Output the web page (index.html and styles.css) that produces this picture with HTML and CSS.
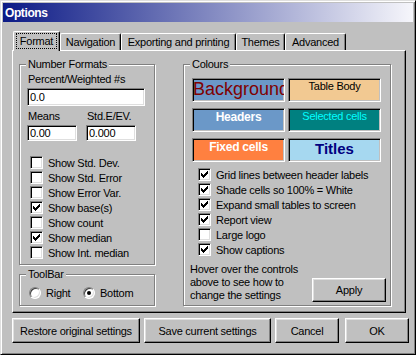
FILE: index.html
```html
<!DOCTYPE html>
<html lang="en">
<head>
  <meta charset="UTF-8" />
  <title>Options</title>
  <link rel="stylesheet" href="styles.css">
</head>
<body>

  <div class="window">
    <div class="titlebar">Options</div>

    <div class="dialog">
      <div class="tabs">
        <div class="tab tab-format tab-active"><span class="focus">Format</span></div>
        <div class="tab tab-nav">Navigation</div>
        <div class="tab tab-export">Exporting and printing</div>
        <div class="tab tab-themes">Themes</div>
        <div class="tab tab-advanced">Advanced</div>
      </div>

      <div class="panel">
        <div class="col-left">
          <div class="group group-numbers">
            <span class="group-label">Number Formats</span>
            <div class="label">Percent/Weighted #s</div>
            <input class="field field-wide" type="text" value="0.0" readonly>
            <div class="pair">
              <div>
                <div class="label">Means</div>
                <input class="field field-short" type="text" value="0.00" readonly>
              </div>
              <div>
                <div class="label">Std.E/EV.</div>
                <input class="field field-short" type="text" value="0.000" readonly>
              </div>
            </div>
            <ul class="checks checks-numbers">
              <li><span class="box"></span>Show Std. Dev.</li>
              <li><span class="box"></span>Show Std. Error</li>
              <li><span class="box"></span>Show Error Var.</li>
              <li><span class="box"><svg width="11" height="11" viewBox="1 1 11 11"><path d="M3 5h1v1h1v1h1v-1h1v-1h1v-1h1v-1h1v3h-1v1h-1v1h-1v1h-1v1h-1v-1h-1v-1h-1z"/></svg></span>Show base(s)</li>
              <li><span class="box"></span>Show count</li>
              <li><span class="box"><svg width="11" height="11" viewBox="1 1 11 11"><path d="M3 5h1v1h1v1h1v-1h1v-1h1v-1h1v-1h1v3h-1v1h-1v1h-1v1h-1v1h-1v-1h-1v-1h-1z"/></svg></span>Show median</li>
              <li><span class="box"></span>Show Int. median</li>
            </ul>
          </div>

          <div class="group group-toolbar">
            <span class="group-label">ToolBar</span>
            <div class="radios">
              <div class="radio-item radio-right"><span class="radio"></span>Right</div>
              <div class="radio-item"><span class="radio radio-on"></span>Bottom</div>
            </div>
          </div>
        </div>

        <div class="group group-colours">
          <span class="group-label">Colours</span>
          <div class="swatches">
            <div class="swatch sw-background">Background</div>
            <div class="swatch sw-body">Table Body</div>
            <div class="swatch sw-headers">Headers</div>
            <div class="swatch sw-selected">Selected cells</div>
            <div class="swatch sw-fixed">Fixed cells</div>
            <div class="swatch sw-titles">Titles</div>
          </div>
          <ul class="checks checks-colours">
            <li><span class="box"><svg width="11" height="11" viewBox="1 1 11 11"><path d="M3 5h1v1h1v1h1v-1h1v-1h1v-1h1v-1h1v3h-1v1h-1v1h-1v1h-1v1h-1v-1h-1v-1h-1z"/></svg></span>Grid lines between header labels</li>
            <li><span class="box"><svg width="11" height="11" viewBox="1 1 11 11"><path d="M3 5h1v1h1v1h1v-1h1v-1h1v-1h1v-1h1v3h-1v1h-1v1h-1v1h-1v1h-1v-1h-1v-1h-1z"/></svg></span>Shade cells so 100% = White</li>
            <li><span class="box"><svg width="11" height="11" viewBox="1 1 11 11"><path d="M3 5h1v1h1v1h1v-1h1v-1h1v-1h1v-1h1v3h-1v1h-1v1h-1v1h-1v1h-1v-1h-1v-1h-1z"/></svg></span>Expand small tables to screen</li>
            <li><span class="box"><svg width="11" height="11" viewBox="1 1 11 11"><path d="M3 5h1v1h1v1h1v-1h1v-1h1v-1h1v-1h1v3h-1v1h-1v1h-1v1h-1v1h-1v-1h-1v-1h-1z"/></svg></span>Report view</li>
            <li><span class="box"></span>Large logo</li>
            <li><span class="box"><svg width="11" height="11" viewBox="1 1 11 11"><path d="M3 5h1v1h1v1h1v-1h1v-1h1v-1h1v-1h1v3h-1v1h-1v1h-1v1h-1v1h-1v-1h-1v-1h-1z"/></svg></span>Show captions</li>
          </ul>
          <div class="hover-row">
            <div class="hover-text">Hover over the controls<br>above to see how to<br>change the settings</div>
            <div class="btn btn-apply">Apply</div>
          </div>
        </div>
      </div>

      <div class="buttons">
        <div class="btn btn-restore">Restore original settings</div>
        <div class="btn btn-save">Save current settings</div>
        <div class="btn btn-cancel">Cancel</div>
        <div class="btn btn-ok">OK</div>
      </div>
    </div>
  </div>

</body>
</html>
```

FILE: styles.css
```css
body {
  margin: 0;
  font-family: 'Liberation Sans', Arial, sans-serif;
  font-size: 11px;
  letter-spacing: -0.25px;
  color: #000;
  background-color: #c0c0c0;
}

/* window frame */
.window {
  width: 416px;
  height: 355px;
  box-sizing: border-box;
  background-color: #c0c0c0;
  border: 1px solid;
  border-color: #dfdfdf #000 #000 #dfdfdf;
  box-shadow: inset 1px 1px #fff, inset -1px -1px #808080;
  padding: 2px;
}

.titlebar {
  height: 19px;
  box-sizing: border-box;
  padding: 1px 0 0 2px;
  display: flex;
  align-items: center;
  background: linear-gradient(to right, #0c1a86, #f6f6fb);
  color: #fff;
  font-weight: bold;
  font-size: 12px;
  letter-spacing: -0.4px;
}

.dialog {
  padding: 9px 0 0 9px;
}

/* tabs */
.tabs {
  display: flex;
  align-items: flex-end;
  height: 19px;
  padding-left: 1px;
  position: relative;
  z-index: 1;
}

.tab {
  height: 17px;
  box-sizing: border-box;
  display: flex;
  align-items: center;
  justify-content: center;
  background-color: #c0c0c0;
  border-top: 1px solid #fff;
  border-left: 1px solid #fff;
  border-right: 1px solid #000;
  border-radius: 2px 2px 0 0;
  box-shadow: inset -1px 0 #808080;
}

.tab-active {
  height: 20px;
  margin-bottom: -1px;
  padding-bottom: 1px;
}

.focus {
  height: 16px;
  box-sizing: border-box;
  display: flex;
  align-items: center;
  padding: 0 3px;
  border: 1px dotted #000;
}

.tab-format { width: 47px; }
.tab-nav { width: 61px; }
.tab-export { width: 115px; }
.tab-themes { width: 49px; }
.tab-advanced { width: 61px; }

/* tab page */
.panel {
  width: 394px;
  height: 263px;
  box-sizing: border-box;
  display: flex;
  gap: 28px;
  padding: 13px 0 0 6px;
  border: 1px solid;
  border-color: #fff #000 #000 #fff;
  box-shadow: inset -1px -1px #808080;
}

.col-left {
  display: flex;
  flex-direction: column;
  gap: 9px;
}

.group {
  position: relative;
  box-sizing: border-box;
  border: 1px solid #808080;
  box-shadow: 1px 1px #fff, inset 1px 1px #fff;
}

.group-label {
  position: absolute;
  top: -7px;
  left: 6px;
  padding: 0 2px;
  line-height: 13px;
  background-color: #c0c0c0;
}

.group-numbers {
  width: 136px;
  height: 201px;
  padding: 8px 0 0 7px;
}

.label {
  line-height: 13px;
  padding-left: 1px;
}

.field {
  display: block;
  box-sizing: border-box;
  height: 18px;
  margin: 2px 0 0;
  padding: 0 0 0 2px;
  border: 1px solid;
  border-color: #808080 #fff #fff #808080;
  box-shadow: inset 1px 1px #000, inset -1px -1px #dfdfdf;
  background-color: #fff;
  font: inherit;
  letter-spacing: inherit;
  color: #000;
  outline: none;
}

.field-wide { width: 118px; }

.field-short {
  width: 50px;
  height: 16px;
}

.pair {
  display: flex;
  gap: 9px;
  margin-top: 4px;
}

.checks {
  list-style: none;
  padding: 0;
}

.checks li {
  display: flex;
  align-items: center;
  height: 15px;
  gap: 5px;
}

.checks-numbers { margin: 14px 0 0 3px; }
.checks-colours { margin: 5px 0 0 6px; }

.box {
  flex: none;
  width: 13px;
  height: 13px;
  box-sizing: border-box;
  border: 1px solid;
  border-color: #808080 #fff #fff #808080;
  box-shadow: inset 1px 1px #000, inset -1px -1px #dfdfdf;
  background-color: #fff;
}

.box svg {
  display: block;
  fill: #000;
}

/* toolbar radios */
.group-toolbar {
  width: 136px;
  height: 32px;
  padding: 10px 0 0 9px;
}

.radios {
  display: flex;
}

.radio-item {
  display: flex;
  align-items: center;
  gap: 5px;
  height: 15px;
}

.radio-right { width: 54px; }

.radio {
  position: relative;
  flex: none;
  width: 12px;
  height: 12px;
  box-sizing: border-box;
  border-radius: 50%;
  border: 1px solid;
  border-color: #808080 #fff #fff #808080;
  box-shadow: inset 1px 1px #404040, inset -1px -1px #dfdfdf;
  background-color: #fff;
}

.radio-on::after {
  content: "";
  position: absolute;
  left: 3px;
  top: 3px;
  width: 4px;
  height: 4px;
  border-radius: 50%;
  background-color: #000;
}

/* colours */
.group-colours {
  width: 208px;
  height: 242px;
  padding: 13px 0 0 8px;
}

.swatches {
  display: grid;
  grid-template-columns: 93px 93px;
  grid-auto-rows: 24px;
  column-gap: 3px;
  row-gap: 6px;
}

.swatch {
  box-sizing: border-box;
  overflow: hidden;
  white-space: nowrap;
  text-align: center;
  padding-top: 1px;
  line-height: 13px;
  border: 1px solid;
  border-color: #808080 #fff #fff #808080;
  box-shadow: inset 1px 1px #000, inset -1px -1px #c0c0c0;
}

.sw-background {
  background-color: #6b98c8;
  color: #800000;
  font-size: 18px;
  line-height: 20px;
  letter-spacing: 0;
  padding-top: 0;
}

.sw-body {
  background-color: #f2c992;
}

.sw-headers {
  background-color: #6b98c8;
  color: #fff;
  font-weight: bold;
  font-size: 12px;
  line-height: 14px;
}

.sw-selected {
  background-color: #008080;
  color: #00ffff;
}

.sw-fixed {
  background-color: #ff8040;
  color: #fff;
  font-weight: bold;
  font-size: 12px;
  line-height: 14px;
}

.sw-titles {
  background-color: #a6d8f0;
  color: #000080;
  font-weight: bold;
  font-size: 15px;
  line-height: 17px;
  letter-spacing: 0;
}

.hover-row {
  display: flex;
  margin: 6px 0 0 -2px;
}

.hover-text {
  width: 122px;
  line-height: 13px;
}

/* buttons */
.btn {
  box-sizing: border-box;
  height: 25px;
  display: flex;
  align-items: center;
  justify-content: center;
  background-color: #c0c0c0;
  border: 1px solid;
  border-color: #fff #000 #000 #fff;
  box-shadow: inset -1px -1px #808080, inset 1px 1px #dfdfdf;
}

.btn-apply {
  width: 74px;
  height: 24px;
  margin-top: 15px;
}

.buttons {
  display: flex;
  margin-top: 5px;
}

.btn-restore { width: 128px; }
.btn-save { width: 127px; margin-left: 4px; }
.btn-cancel { width: 64px; margin-left: 4px; }
.btn-ok { width: 64px; margin-left: 6px; }
```
